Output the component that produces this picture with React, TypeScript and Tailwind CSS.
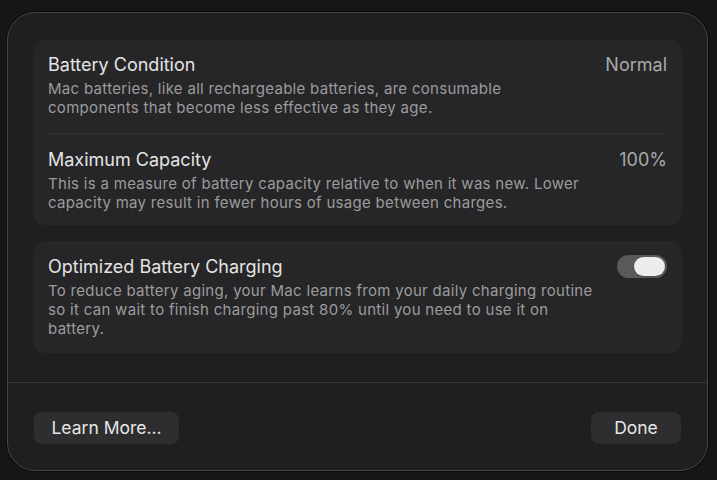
import React, { useState } from 'react';

const font = { fontFamily: 'Inter, "Noto Sans", sans-serif' };

const Row = ({ title, value, lines }: { title: string; value?: string; lines: string[] }) => (
  <div className="flex items-start justify-between">
    <div>
      <div className="text-[18px] leading-[22px] text-[#e4e4e4]">{title}</div>
      <div className="mt-[3px] text-[15px] tracking-[0.3px] leading-[19px] text-[#9c9c9c]">
        {lines.map((l, i) => (
          <div key={i}>{l}</div>
        ))}
      </div>
    </div>
    {value && <div className="text-[18px] leading-[22px] text-[#a9a9a9]">{value}</div>}
  </div>
);

const App: React.FC = () => {
  const [on, setOn] = useState(true);

  return (
    <div style={font} className="w-full h-[480px] bg-[#161616] pt-[12px] pl-[7px] overflow-hidden">
      <div className="w-[701px] h-[459px] rounded-[28px] bg-[#1f1f20] border border-[#474749] shadow-[0_0_0_1px_#0b0b0b] flex flex-col">
        <div className="px-[25px] pt-[27px] flex flex-col gap-[16px]">
          <div className="rounded-[11px] bg-[#262628] px-[15px] pt-[14px] pb-[13px]">
            <Row
              title="Battery Condition"
              value="Normal"
              lines={[
                'Mac batteries, like all rechargeable batteries, are consumable',
                'components that become less effective as they age.',
              ]}
            />
            <div className="h-px bg-[#323234] mt-[16px] mb-[15px]" />
            <Row
              title="Maximum Capacity"
              value="100%"
              lines={[
                'This is a measure of battery capacity relative to when it was new. Lower',
                'capacity may result in fewer hours of usage between charges.',
              ]}
            />
          </div>
          <div className="rounded-[11px] bg-[#262628] px-[15px] pt-[15px] pb-[15px]">
            <div className="flex items-start justify-between">
              <Row
                title="Optimized Battery Charging"
                lines={[
                  'To reduce battery aging, your Mac learns from your daily charging routine',
                  'so it can wait to finish charging past 80% until you need to use it on',
                  'battery.',
                ]}
              />
              <button
                onClick={() => setOn(!on)}
                className={`mt-[-1px] w-[50px] h-[23px] rounded-full bg-[#59595b] flex items-center px-[2px] ${on ? 'justify-end' : 'justify-start'}`}
              >
                <span className="w-[31px] h-[19px] rounded-full bg-[#ececec] shadow" />
              </button>
            </div>
          </div>
        </div>
        <div className="mt-[29px] h-px bg-[#353537]" />
        <div className="flex justify-between px-[26px] pt-[29px]">
          <button className="w-[145px] h-[32px] rounded-[8px] bg-[#2e2e30] text-[17.5px] text-[#e6e6e6]">
            Learn More...
          </button>
          <button className="w-[90px] h-[32px] rounded-[8px] bg-[#2e2e30] text-[17.5px] text-[#e6e6e6]">
            Done
          </button>
        </div>
      </div>
    </div>
  );
};

export default App;
